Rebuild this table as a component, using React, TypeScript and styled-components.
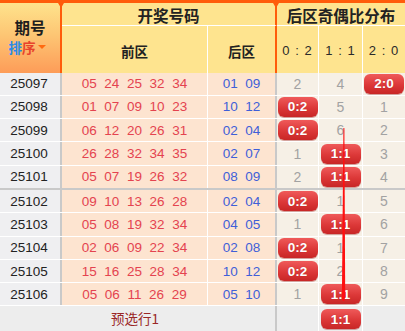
import React from "react";
import styled, { createGlobalStyle, css } from "styled-components";

const Global = createGlobalStyle`
  html, body { margin: 0; padding: 0; background: #ffffff; overflow: hidden; }
  * { box-sizing: border-box; }
`;

const COLS = "62px 146px 69px 42px 44px 42px";
const ORANGE = "#ff5c0a";
const GREY_LINE = "#c9c9c9";
const FONT = `"Liberation Sans", "Noto Sans CJK SC", Arial, sans-serif`;
const CJK = `"Noto Sans CJK SC", "Liberation Sans", sans-serif`;

const Wrap = styled.div`
  position: relative;
  width: 405px;
  font-family: ${FONT};
`;

const TopBar = styled.div`
  height: 3px;
  background: ${ORANGE};
`;

const Header = styled.div`
  display: grid;
  grid-template-columns: ${COLS};
  grid-template-rows: 23px 46.5px;
  background: #fee48f;
`;

const HCell = styled.div<{ $line?: "orange" | "white" | "none"; $bottom?: boolean; $notch?: boolean }>`
  position: relative;
  display: flex;
  align-items: center;
  justify-content: center;
  font-family: ${CJK};
  color: #222;
  border-right: ${(p) =>
    p.$line === "orange" ? `2px solid ${ORANGE}` : p.$line === "white" ? "1px solid #ffffff" : "none"};
  border-bottom: ${(p) => (p.$bottom ? "1px solid #ffffff" : "none")};
  ${(p) =>
    p.$notch &&
    css`
      &::after {
        content: "";
        position: absolute;
        top: 0;
        right: -4px;
        border-left: 3px solid transparent;
        border-right: 3px solid transparent;
        border-top: 5px solid ${ORANGE};
      }
    `}
`;

const PeriodHead = styled(HCell)`
  grid-row: 1 / span 2;
  flex-direction: column;
  gap: 1px;
  padding-bottom: 3px;
  background: linear-gradient(to bottom, #fee38c 0%, #fdc674 45%, #fd9c58 100%);
`;

const PeriodTitle = styled.div`
  font-size: 15.5px;
  font-weight: 700;
  line-height: 20px;
  color: #1e1e1e;
`;

const Sort = styled.div`
  display: flex;
  align-items: center;
  font-size: 13.5px;
  font-weight: 700;
  line-height: 18px;
  margin-left: -6px;
`;

const SortChar = styled.span<{ $c: string }>`
  color: ${(p) => p.$c};
`;

const Caret = styled.span`
  width: 0;
  height: 0;
  margin-left: 2px;
  margin-top: 1px;
  border-left: 4px solid transparent;
  border-right: 4px solid transparent;
  border-top: 4px solid #ff6a10;
`;

const GroupTitle = styled(HCell)<{ $span: number }>`
  grid-column: span ${(p) => p.$span};
  font-size: 15.5px;
  font-weight: 700;
  padding-top: 1px;
`;

const SubTitle = styled(HCell)`
  font-size: 13.5px;
  font-weight: 700;
  padding-top: 3px;
`;

const RatioTitle = styled(HCell)`
  font-family: ${FONT};
  font-size: 13px;
  letter-spacing: 1px;
  color: #2a2a2a;
  padding-top: 3px;
`;

const Body = styled.div`
  display: flex;
  flex-direction: column;
`;

const Row = styled.div<{ $thick?: boolean }>`
  display: grid;
  grid-template-columns: ${COLS};
  height: ${(p) => (p.$thick ? "24.3px" : "23.3px")};
  border-bottom: ${(p) => (p.$thick ? `2px solid ${GREY_LINE}` : "1px solid #ffffff")};
`;

const Cell = styled.div<{ $bg: string; $line: "grey" | "white" | "none" }>`
  display: flex;
  align-items: center;
  justify-content: center;
  background: ${(p) => p.$bg};
  border-right: ${(p) =>
    p.$line === "grey" ? `2px solid ${GREY_LINE}` : p.$line === "white" ? "1px solid #ffffff" : "none"};
  font-size: 13.5px;
  overflow: visible;
`;

const Period = styled(Cell)`
  color: #222;
  padding-right: 2px;
`;

const Balls = styled(Cell)<{ $color: string }>`
  gap: 7.6px;
  color: ${(p) => p.$color};
`;

const DistCell = styled(Cell)`
  color: #a2a2a2;
  font-size: 14px;
`;

const Badge = styled.div`
  width: 40px;
  height: 20px;
  border-radius: 6px;
  display: flex;
  align-items: center;
  justify-content: center;
  background: linear-gradient(to bottom, #ef5a5a 0%, #dc3838 55%, #c82626 100%);
  box-shadow: 0 1px 0 rgba(150, 20, 20, 0.35);
  color: #ffffff;
  font-size: 13.5px;
  font-weight: 700;
  text-shadow: 0 0 1px rgba(120, 0, 0, 0.4);
`;

const Footer = styled.div`
  display: grid;
  grid-template-columns: ${COLS};
  height: 26px;
  background: #ededed;
`;

const FooterText = styled(Cell)`
  font-family: ${CJK};
  color: #9a2626;
  font-size: 13.5px;
  padding-bottom: 2px;
`;

const Overlay = styled.svg`
  position: absolute;
  left: 0;
  top: 0;
  pointer-events: none;
`;

type RowData = { p: string; f: string[]; b: string[]; d: (number | null)[] };

const LABELS = ["0:2", "1:1", "2:0"];

const rows: RowData[] = [
  { p: "25097", f: ["05", "24", "25", "32", "34"], b: ["01", "09"], d: [2, 4, null] },
  { p: "25098", f: ["01", "07", "09", "10", "23"], b: ["10", "12"], d: [null, 5, 1] },
  { p: "25099", f: ["06", "12", "20", "26", "31"], b: ["02", "04"], d: [null, 6, 2] },
  { p: "25100", f: ["26", "28", "32", "34", "35"], b: ["02", "07"], d: [1, null, 3] },
  { p: "25101", f: ["05", "07", "19", "26", "32"], b: ["08", "09"], d: [2, null, 4] },
  { p: "25102", f: ["09", "10", "13", "26", "28"], b: ["02", "04"], d: [null, 1, 5] },
  { p: "25103", f: ["05", "08", "19", "32", "34"], b: ["04", "05"], d: [1, null, 6] },
  { p: "25104", f: ["02", "06", "09", "22", "34"], b: ["02", "08"], d: [null, 1, 7] },
  { p: "25105", f: ["15", "16", "25", "28", "34"], b: ["10", "12"], d: [null, 2, 8] },
  { p: "25106", f: ["05", "06", "11", "26", "29"], b: ["05", "10"], d: [1, null, 9] },
];

const DIST_BG = "#f6f0e6";
const ZONE_BG = "#fde4d0";
const PERIOD_BG = "#efeff1";

export default function App() {
  return (
    <>
      <Global />
      <Wrap>
        <TopBar />
        <Header>
          <PeriodHead $line="orange" $notch>
            <PeriodTitle>期号</PeriodTitle>
            <Sort>
              <SortChar $c="#2b8be6">排</SortChar>
              <SortChar $c="#e8432b">序</SortChar>
              <Caret />
            </Sort>
          </PeriodHead>
          <GroupTitle $span={2} $line="orange" $bottom $notch>
            开奖号码
          </GroupTitle>
          <GroupTitle $span={3} $line="none" $bottom>
            后区奇偶比分布
          </GroupTitle>
          <SubTitle $line="white">前区</SubTitle>
          <SubTitle $line="orange">后区</SubTitle>
          <RatioTitle $line="white">0 : 2</RatioTitle>
          <RatioTitle $line="white">1 : 1</RatioTitle>
          <RatioTitle $line="none">2 : 0</RatioTitle>
        </Header>
        <Body>
          {rows.map((r, i) => (
            <Row key={r.p} $thick={i === 4}>
              <Period $bg={PERIOD_BG} $line="grey">
                {r.p}
              </Period>
              <Balls $bg={ZONE_BG} $line="white" $color="#e4434f">
                {r.f.map((n, k) => (
                  <span key={k}>{n}</span>
                ))}
              </Balls>
              <Balls $bg={ZONE_BG} $line="grey" $color="#3f5fd8">
                {r.b.map((n, k) => (
                  <span key={k}>{n}</span>
                ))}
              </Balls>
              {r.d.map((v, k) => (
                <DistCell key={k} $bg={DIST_BG} $line={k < 2 ? "white" : "none"}>
                  {v === null ? <Badge>{LABELS[k]}</Badge> : v}
                </DistCell>
              ))}
            </Row>
          ))}
        </Body>
        <Footer>
          <Cell $bg="transparent" $line="none" />
          <FooterText $bg="transparent" $line="none">
            预选行1
          </FooterText>
          <Cell $bg="transparent" $line="grey" />
          <Cell $bg="transparent" $line="white" />
          <Cell $bg="transparent" $line="white">
            <Badge>1:1</Badge>
          </Cell>
          <Cell $bg="transparent" $line="none" />
        </Footer>
        <Overlay width="405" height="331" viewBox="0 0 405 331">
          <polygon points="343.4,128 344.4,128 345.2,297 344.2,301 342.9,301 341.9,297" fill="#ff1010" />
        </Overlay>
      </Wrap>
    </>
  );
}
